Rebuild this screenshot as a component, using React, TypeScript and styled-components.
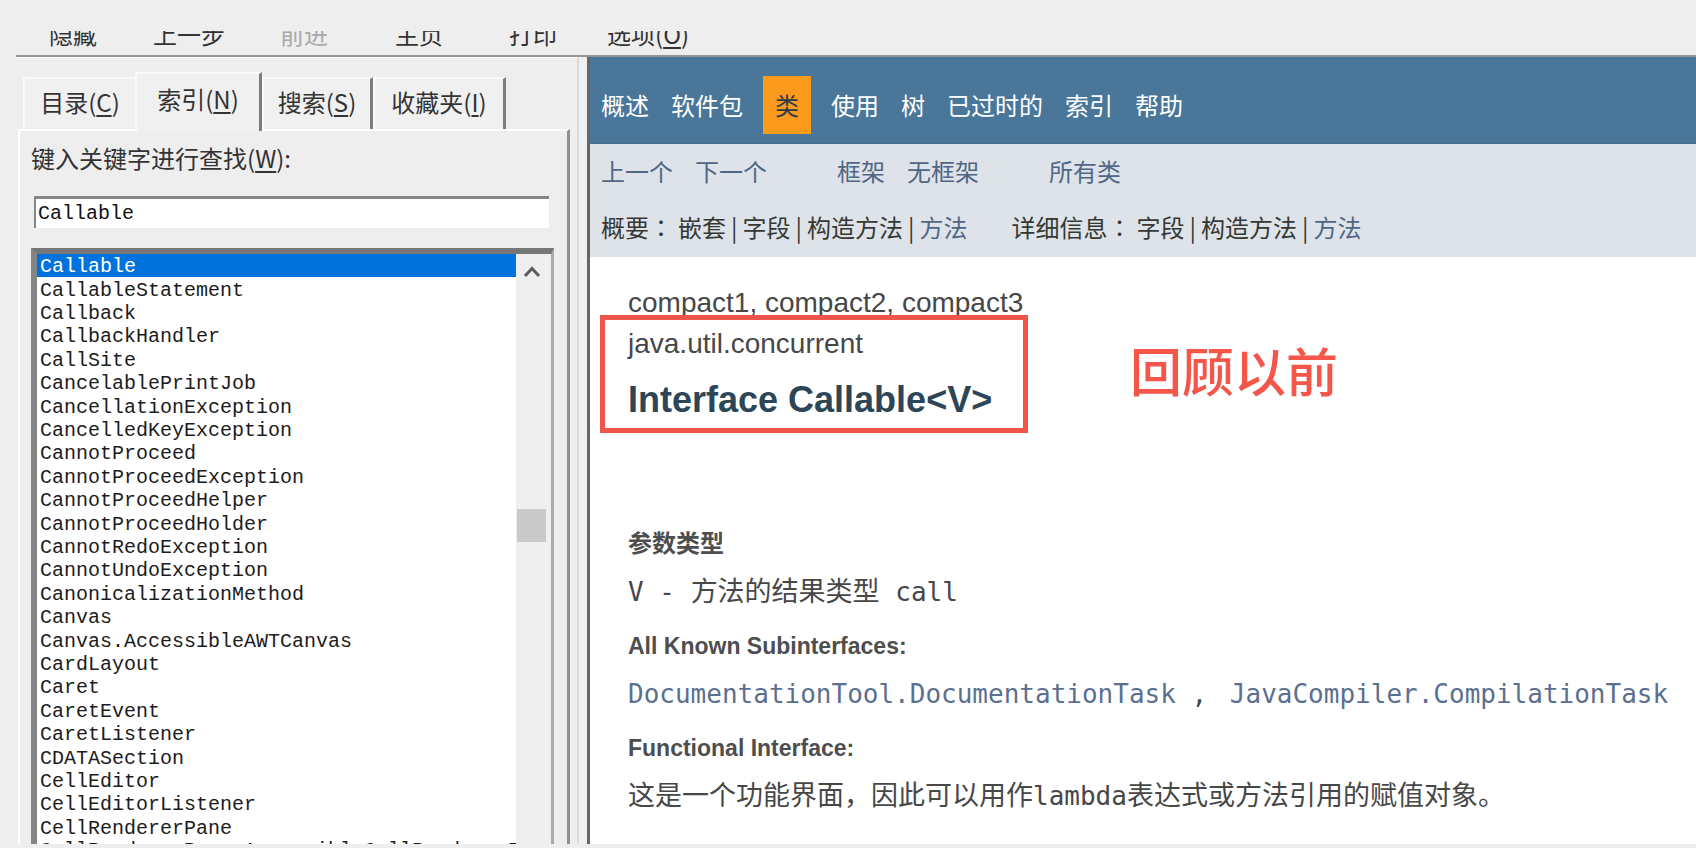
import React, { useState } from "react";
import styled, { createGlobalStyle } from "styled-components";

const ui = `"Noto Sans CJK SC", "Noto Sans", sans-serif`;
const latin = `"Liberation Sans", "Noto Sans CJK SC", sans-serif`;
const mono = `"Liberation Mono", "Noto Sans CJK SC", monospace`;
const code = `"DejaVu Sans Mono", "Noto Sans CJK SC", monospace`;

const GlobalStyle = createGlobalStyle`
  *, *::before, *::after { box-sizing: border-box; }
  body { margin: 0; background: #eeeeee; }
  a { color: inherit; text-decoration: none; }
  u { text-underline-offset: 3px; text-decoration-thickness: 2px; }
`;

const Window = styled.div`
  display: flex;
  flex-direction: column;
  height: 100vh;
  min-width: 1100px;
  padding: 31px 0 4px 16px;
  overflow: hidden;
  background: #eeeeee;
  font: 24px/30px ${ui};
  color: #333;
`;

const Toolbar = styled.div`
  display: grid;
  flex: none;
  grid-template-columns: 104px 127px 115px 114px 98px auto;
  align-content: end;
  justify-content: start;
  height: 26px;
  padding: 0 0 9px 33px;
  border-bottom: 2px solid #949494;
  overflow: hidden;
`;

const ToolButton = styled.button`
  padding: 0;
  border: 0;
  background: none;
  font: 24px/24px ${ui};
  text-align: left;
  color: #333;
  &:disabled { color: #a8a8a8; }
`;

const Body = styled.div`
  display: flex;
  flex: 1;
  min-height: 0;
`;

const Sidebar = styled.aside`
  display: flex;
  flex: none;
  flex-direction: column;
  width: 563px;
  padding-top: 14px;
  border-top: 1px solid #fff;
  border-right: 2px solid #dadada;
`;

const Splitter = styled.div`
  flex: none;
  width: 8px;
  background: #f0f0f0;
`;

const TabList = styled.div`
  display: flex;
  align-items: flex-end;
  height: 57px;
  padding-left: 7px;
`;

const Tab = styled.button<{ $active: boolean; $width: number }>`
  position: relative;
  z-index: ${(p) => (p.$active ? 1 : 0)};
  width: ${(p) => p.$width}px;
  height: ${(p) => (p.$active ? 59 : 52)}px;
  margin-bottom: ${(p) => (p.$active ? -2 : 0)}px;
  padding: 0 0 ${(p) => (p.$active ? 8 : 4)}px;
  border: 0 solid #fafafa;
  border-width: 2px 0 0 2px;
  background: #f0f0f0;
  font: 24px/30px ${ui};
  color: #333;
  & + & { border-right: 3px solid #7c7c7c; }
`;

const Panel = styled.div`
  display: flex;
  flex: 1;
  flex-direction: column;
  min-height: 0;
  margin: 0 7px 0 2px;
  padding: 12px 13px 0 11px;
  border: 0 solid #fff;
  border-width: 2px 3px 0 2px;
  border-right-color: #8f8f8f;
`;

const KeywordInput = styled.input`
  height: 32px;
  margin: 23px 5px 20px 3px;
  padding: 0 2px;
  border: 0 solid #868686;
  border-width: 3px 0 0 2px;
  outline: 0;
  background: #fff;
  font: 20px/28px ${mono};
  color: #111;
`;

const ListFrame = styled.div`
  display: flex;
  flex: 1;
  min-height: 0;
  border: 0 solid #858585;
  border-width: 6px 3px 0 6px;
  border-top-color: #777;
  border-right-color: #aaa;
  background: #fff;
`;

const IndexList = styled.ul`
  display: grid;
  flex: 1;
  grid-template-rows: repeat(25, minmax(0, 1fr)) 5px;
  min-width: 0;
  margin: 0;
  padding: 0;
  overflow: hidden;
  list-style: none;
`;

const IndexItem = styled.li<{ $selected: boolean }>`
  display: flex;
  align-items: center;
  min-height: 0;
  padding: 2px 0 0 3px;
  background: ${(p) => (p.$selected ? "#0072dc" : "transparent")};
  font: 20px/23px ${mono};
  white-space: nowrap;
  color: ${(p) => (p.$selected ? "#fff" : "#1c1c1c")};
  cursor: default;
  &:last-child {
    align-items: flex-start;
    padding-top: 0;
    overflow: hidden;
  }
`;

const ScrollTrack = styled.div`
  display: flex;
  flex: none;
  flex-direction: column;
  width: 35px;
  padding: 11px 5px 0 1px;
  background: #efefef;
`;

const ScrollUp = styled.button`
  display: flex;
  justify-content: center;
  padding: 0;
  border: 0;
  background: none;
`;

const ScrollThumb = styled.div`
  height: 33px;
  margin-top: 230px;
  background: #cacaca;
`;

const Doc = styled.main`
  flex: 1;
  min-width: 0;
  border-left: 3px solid #666;
  overflow: hidden;
  background: #fff;
`;

const TopNav = styled.nav`
  display: flex;
  align-items: center;
  gap: 22px;
  height: 87px;
  padding: 10px 11px 0;
  border-bottom: 1px solid #4a6f8c;
  background: #4a7799;
  white-space: nowrap;
  color: #fff;
`;

const CurrentPage = styled.span`
  margin: 0 -2px;
  padding: 14px 12px;
  background: #fb9a1c;
  color: #2f3a48;
`;

const SubNav = styled.div`
  display: flex;
  flex-direction: column;
  gap: 26px;
  height: 113px;
  padding: 12px 11px 0;
  background: #dee3ea;
  white-space: nowrap;
`;

const SubRow = styled.div<{ $gap: number }>`
  display: flex;
  gap: ${(p) => p.$gap}px;
  color: #353833;
`;

const LinkGroup = styled.div<{ $gap: number }>`
  display: flex;
  gap: ${(p) => p.$gap}px;
`;

const SubLink = styled.a`
  color: #4f6785;
`;

const Colon = styled.span`
  font-family: "Noto Sans CJK TC", sans-serif;
`;

const Article = styled.article`
  padding: 25px 20px 0 38px;
  font-family: ${latin};
  color: #474747;
  white-space: nowrap;
`;

const Line = styled.div`
  font-size: 28px;
  line-height: 41px;
`;

const TitleBlock = styled.header`
  position: relative;
`;

const Title = styled.h1`
  margin: 16px 0 0;
  font-size: 36px;
  line-height: 40px;
  color: #2c4557;
`;

const Highlight = styled.div`
  position: absolute;
  top: -8px;
  bottom: -13px;
  left: -28px;
  width: 428px;
  border: 5px solid #ef554b;
  pointer-events: none;
`;

const Note = styled.div`
  position: absolute;
  top: 21px;
  left: 502px;
  font: 500 52px/52px ${ui};
  color: #f5564a;
`;

const Details = styled.dl`
  margin: 109px 0 0;
`;

const Term = styled.dt<{ $cjk?: boolean }>`
  font: bold ${(p) => (p.$cjk ? 24 : 23)}px/30px ${latin};
  color: #4e4e4e;
`;

const Description = styled.dd`
  height: 36px;
  margin: 13px 0 23px;
  font: 27px/36px "Noto Sans CJK SC", sans-serif;
`;

const Code = styled.code`
  font: 26px/36px ${code};
  white-space: pre;
`;

const CodeLink = styled.a`
  color: #5b708f;
`;

const Comma = styled.span`
  margin-right: 7px;
`;

const tabs = [
  { label: "目录", key: "C", width: 112 },
  { label: "索引", key: "N", width: 127 },
  { label: "搜索", key: "S", width: 111 },
  { label: "收藏夹", key: "I", width: 133 },
];

const entries = [
  "Callable", "CallableStatement", "Callback", "CallbackHandler", "CallSite",
  "CancelablePrintJob", "CancellationException", "CancelledKeyException",
  "CannotProceed", "CannotProceedException", "CannotProceedHelper",
  "CannotProceedHolder", "CannotRedoException", "CannotUndoException",
  "CanonicalizationMethod", "Canvas", "Canvas.AccessibleAWTCanvas", "CardLayout",
  "Caret", "CaretEvent", "CaretListener", "CDATASection", "CellEditor",
  "CellEditorListener", "CellRendererPane", "CellRendererPane.AccessibleCellRendererPane",
];

export default function App() {
  const [tab, setTab] = useState(1);
  const [keyword, setKeyword] = useState("Callable");
  const [selected, setSelected] = useState(0);

  return (
    <Window>
      <GlobalStyle />
      <Toolbar role="toolbar">
        <ToolButton>隐藏</ToolButton>
        <ToolButton>上一步</ToolButton>
        <ToolButton disabled>前进</ToolButton>
        <ToolButton>主页</ToolButton>
        <ToolButton>打印</ToolButton>
        <ToolButton>选项(<u>O</u>)</ToolButton>
      </Toolbar>
      <Body>
        <Sidebar>
          <TabList role="tablist">
            {tabs.map((t, i) => (
              <Tab
                key={t.key}
                role="tab"
                aria-selected={i === tab}
                $active={i === tab}
                $width={t.width}
                onClick={() => setTab(i)}
              >
                {t.label}(<u>{t.key}</u>)
              </Tab>
            ))}
          </TabList>
          <Panel role="tabpanel">
            <label htmlFor="keyword">键入关键字进行查找(<u>W</u>):</label>
            <KeywordInput id="keyword" value={keyword} onChange={(e) => setKeyword(e.target.value)} />
            <ListFrame>
              <IndexList role="listbox">
                {entries.map((name, i) => (
                  <IndexItem
                    key={name}
                    role="option"
                    aria-selected={i === selected}
                    $selected={i === selected}
                    onClick={() => setSelected(i)}
                  >
                    {name}
                  </IndexItem>
                ))}
              </IndexList>
              <ScrollTrack>
                <ScrollUp aria-label="Scroll up">
                  <svg width="18" height="14" viewBox="0 0 18 14" fill="none" stroke="#5c5c5c" strokeWidth="3">
                    <path d="M2 11 L9 3.5 L16 11" />
                  </svg>
                </ScrollUp>
                <ScrollThumb />
              </ScrollTrack>
            </ListFrame>
          </Panel>
        </Sidebar>
        <Splitter />
        <Doc>
          <TopNav>
            <a href="#overview">概述</a>
            <a href="#package">软件包</a>
            <CurrentPage>类</CurrentPage>
            <a href="#use">使用</a>
            <a href="#tree">树</a>
            <a href="#deprecated">已过时的</a>
            <a href="#index">索引</a>
            <a href="#help">帮助</a>
          </TopNav>
          <SubNav>
            <SubRow $gap={70}>
              <LinkGroup $gap={22}>
                <SubLink href="#prev">上一个</SubLink>
                <SubLink href="#next">下一个</SubLink>
              </LinkGroup>
              <LinkGroup $gap={22}>
                <SubLink href="#frames">框架</SubLink>
                <SubLink href="#noframes">无框架</SubLink>
              </LinkGroup>
              <SubLink href="#all">所有类</SubLink>
            </SubRow>
            <SubRow $gap={44}>
              <LinkGroup $gap={5}>
                <span>概要<Colon>：</Colon></span>
                <span>嵌套</span><span>|</span>
                <span>字段</span><span>|</span>
                <span>构造方法</span><span>|</span>
                <SubLink href="#method-summary">方法</SubLink>
              </LinkGroup>
              <LinkGroup $gap={5}>
                <span>详细信息<Colon>：</Colon></span>
                <span>字段</span><span>|</span>
                <span>构造方法</span><span>|</span>
                <SubLink href="#method-detail">方法</SubLink>
              </LinkGroup>
            </SubRow>
          </SubNav>
          <Article>
            <Line>compact1, compact2, compact3</Line>
            <TitleBlock>
              <Line>java.util.concurrent</Line>
              <Title>Interface Callable&lt;V&gt;</Title>
              <Highlight />
              <Note>回顾以前</Note>
            </TitleBlock>
            <Details>
              <Term $cjk>参数类型</Term>
              <Description>
                <Code>{"V - "}</Code>方法的结果类型<Code>{" call"}</Code>
              </Description>
              <Term>All Known Subinterfaces:</Term>
              <Description>
                <Code>
                  <CodeLink href="#documentation-task">DocumentationTool.DocumentationTask</CodeLink>
                  {" "}<Comma>,</Comma>{" "}
                  <CodeLink href="#compilation-task">JavaCompiler.CompilationTask</CodeLink>
                </Code>
              </Description>
              <Term>Functional Interface:</Term>
              <Description>
                这是一个功能界面，因此可以用作<Code>lambda</Code>表达式或方法引用的赋值对象。
              </Description>
            </Details>
          </Article>
        </Doc>
      </Body>
    </Window>
  );
}
